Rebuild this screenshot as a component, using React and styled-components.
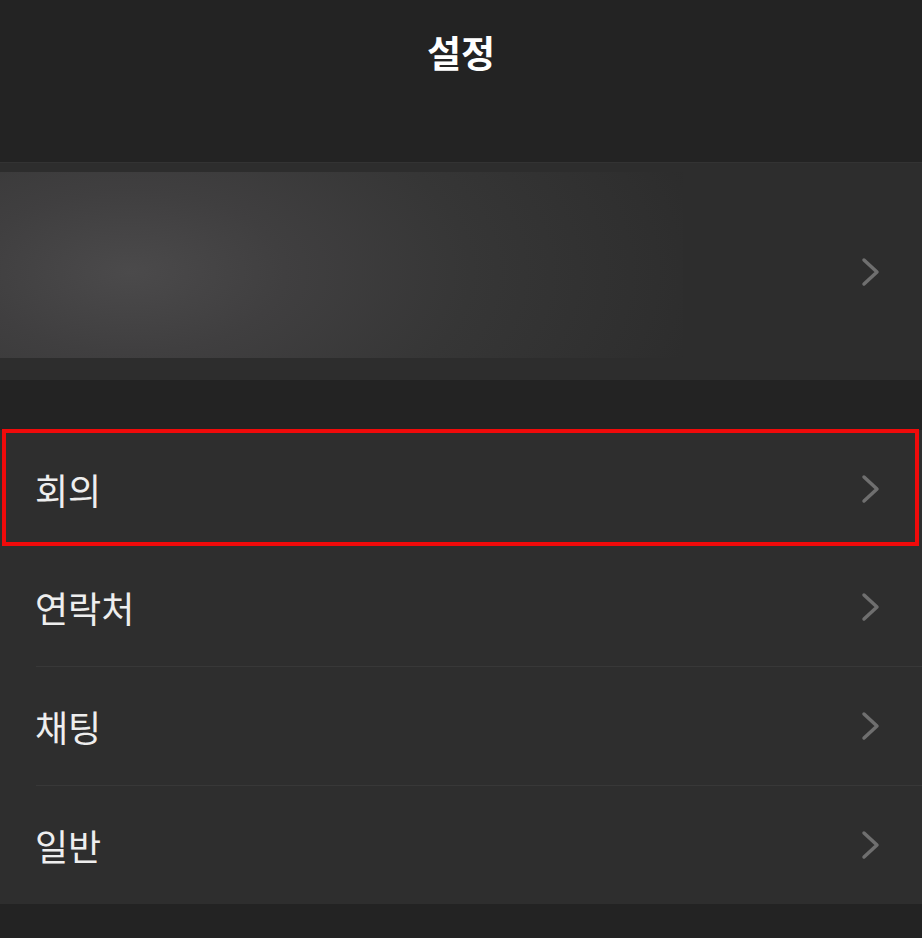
import React from 'react'
import styled, { createGlobalStyle } from 'styled-components'

const GlobalStyle = createGlobalStyle`
    html, body {
        margin: 0;
        padding: 0;
        background-color: #232323;
    }
    body {
        font-family: 'Noto Sans CJK KR', 'Noto Sans', sans-serif;
    }
`

const Page = styled.div`
    width: 922px;
    height: 938px;
    background-color: #232323;
    display: flex;
    flex-direction: column;
    overflow: hidden;
`

const Header = styled.header`
    height: 162px;
    display: flex;
    justify-content: center;
    padding-top: 24px;
    box-sizing: border-box;
`

const Title = styled.h1`
    margin: 0;
    font-size: 37px;
    line-height: 56px;
    font-weight: 700;
    color: #ffffff;
`

const ProfileSection = styled.section`
    height: 218px;
    box-sizing: border-box;
    border-top: 1px solid #333333;
    background-color: #2d2d2d;
    display: flex;
    align-items: center;
    justify-content: space-between;
    padding-right: 40px;
`

const ProfileBlur = styled.div`
    align-self: flex-start;
    margin-top: 9px;
    width: 683px;
    height: 186px;
    background: radial-gradient(
        ellipse 620px 320px at 130px 100px,
        #4b4a4b 0%,
        #403f40 25%,
        #363636 55%,
        #2f2f2f 85%,
        #2b2b2b 100%
    );
`

const Spacer = styled.div`
    height: 50px;
`

const List = styled.ul`
    margin: 0;
    padding: 0;
    list-style: none;
    background-color: #2e2e2e;
`

const Row = styled.li`
    position: relative;
    height: 118px;
    display: flex;
    align-items: center;
    justify-content: space-between;
    padding: 0 40px 0 35px;
    ${(props) =>
        props.highlighted &&
        `&::after {
            content: '';
            position: absolute;
            left: 2px;
            right: 3px;
            top: -1px;
            bottom: 2px;
            border: 4px solid #f00a0a;
            pointer-events: none;
        }`}
`

const Divider = styled.div`
    height: 1px;
    margin-left: 36px;
    background-color: #383838;
`

const Label = styled.span`
    font-size: 36px;
    font-weight: 400;
    color: #eeeeee;
`

const Chevron = () => (
    <svg width="22" height="30" viewBox="0 0 22 30" fill="none">
        <path
            d="M4 3 L17 15 L4 27"
            stroke="#6f6f6f"
            strokeWidth="3.5"
            strokeLinecap="round"
            strokeLinejoin="round"
        />
    </svg>
)

const items = ['회의', '연락처', '채팅', '일반']

const App = () => (
    <Page>
        <GlobalStyle />
        <Header>
            <Title>설정</Title>
        </Header>
        <ProfileSection>
            <ProfileBlur />
            <Chevron />
        </ProfileSection>
        <Spacer />
        <List>
            {items.map((item, index) => (
                <React.Fragment key={item}>
                    {index > 1 && <Divider />}
                    <Row highlighted={index === 0}>
                        <Label>{item}</Label>
                        <Chevron />
                    </Row>
                </React.Fragment>
            ))}
        </List>
    </Page>
)

export default App
